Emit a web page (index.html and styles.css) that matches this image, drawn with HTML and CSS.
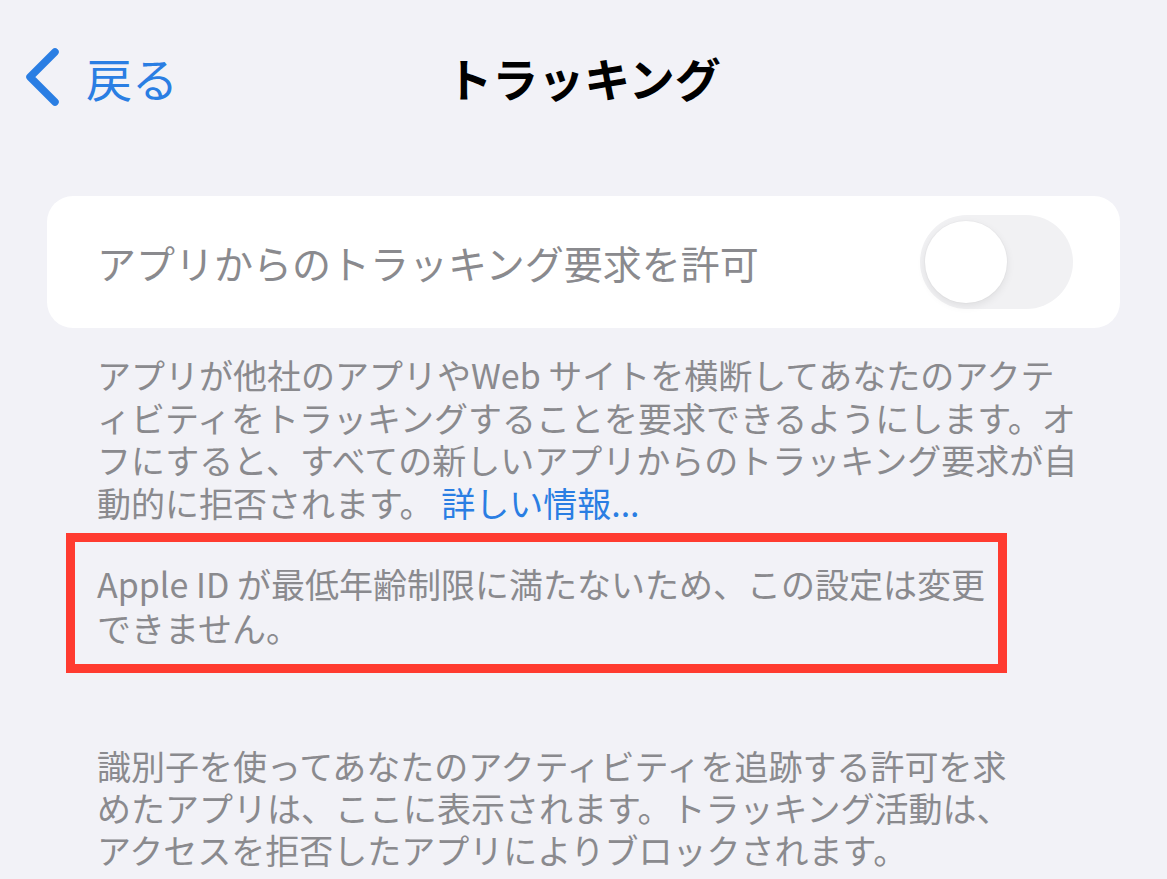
FILE: index.html
```html
<!DOCTYPE html>
<html lang="ja">
<head>
<meta charset="utf-8">
<title>トラッキング</title>
<link rel="stylesheet" href="styles.css">
</head>
<body>
<div class="screen">
  <header class="nav">
    <div class="back">
      <svg class="chev" width="36" height="60" viewBox="0 0 36 60" aria-hidden="true">
        <polyline points="31,5 6,30 31,55" fill="none" stroke="#2a7ee3" stroke-width="7.5" stroke-linecap="round" stroke-linejoin="round"/>
      </svg>
      <span class="back-label">戻る</span>
    </div>
    <h1 class="title">トラッキング</h1>
    <div class="spacer"></div>
  </header>

  <section class="card">
    <span class="card-label">アプリからのトラッキング要求を許可</span>
    <div class="toggle"><div class="knob"></div></div>
  </section>

  <p class="footer">アプリが他社のアプリやWeb サイトを横断してあなたのアクテ<br>ィビティをトラッキングすることを要求できるようにします。オ<br>フにすると、すべての新しいアプリからのトラッキング要求が自<br>動的に拒否されます。 <span class="link">詳しい情報...</span></p>

  <div class="notice">
    <p class="notice-text">Apple ID が最低年齢制限に満たないため、この設定は変更<br>できません。</p>
  </div>

  <p class="footer bottom">識別子を使ってあなたのアクティビティを追跡する許可を求<br>めたアプリは、ここに表示されます。トラッキング活動は、<br>アクセスを拒否したアプリによりブロックされます。</p>
</div>
</body>
</html>
```

FILE: styles.css
```css
html, body {
  margin: 0;
  padding: 0;
  background: #f2f2f7;
}
body {
  font-family: "Noto Sans CJK JP", "Noto Sans", sans-serif;
  width: 1167px;
  height: 879px;
  overflow: hidden;
}
.screen {
  display: flex;
  flex-direction: column;
}
.nav {
  margin-top: 22px;
  height: 110px;
  display: grid;
  grid-template-columns: 1fr auto 1fr;
  align-items: center;
}
.back {
  display: flex;
  align-items: center;
  gap: 26px;
  padding-left: 24px;
}
.chev {
  display: block;
}
.back-label {
  color: #2a7ee3;
  font-size: 46px;
  line-height: 1;
}
.title {
  margin: 0;
  font-size: 46px;
  font-weight: 700;
  color: #000;
  line-height: 1;
}
.card {
  margin: 64px 47px 0 47px;
  height: 132px;
  background: #fff;
  border-radius: 26px;
  display: flex;
  align-items: center;
  justify-content: space-between;
  padding: 0 47px 0 50px;
}
.card-label {
  color: #8a8a8e;
  font-size: 39px;
}
.toggle {
  width: 153px;
  height: 94px;
  border-radius: 47px;
  background: #f1f1f3;
  display: flex;
  align-items: center;
  padding-left: 5px;
  box-sizing: border-box;
}
.knob {
  width: 82px;
  height: 82px;
  border-radius: 50%;
  background: #fff;
  box-shadow: 0 3px 8px rgba(0,0,0,0.08), 0 0 0 1px rgba(0,0,0,0.02);
}
.footer {
  margin: 26px 0 0 0;
  padding: 0 40px 0 97px;
  color: #8a8a8e;
  font-size: 34px;
  line-height: 42.5px;
  letter-spacing: 0;
  white-space: nowrap;
}
.link {
  color: #2a7ee3;
}
.notice {
  margin: 9px 0 0 66px;
  width: 941px;
  box-sizing: border-box;
  border: 9px solid #ff3b30;
  padding: 20px 0 14px 22px;
}
.notice-text {
  margin: 0;
  color: #8a8a8e;
  font-size: 34px;
  line-height: 44px;
  letter-spacing: 0;
  white-space: nowrap;
}
.footer.bottom {
  margin-top: 72px;
  line-height: 42px;
}
```
